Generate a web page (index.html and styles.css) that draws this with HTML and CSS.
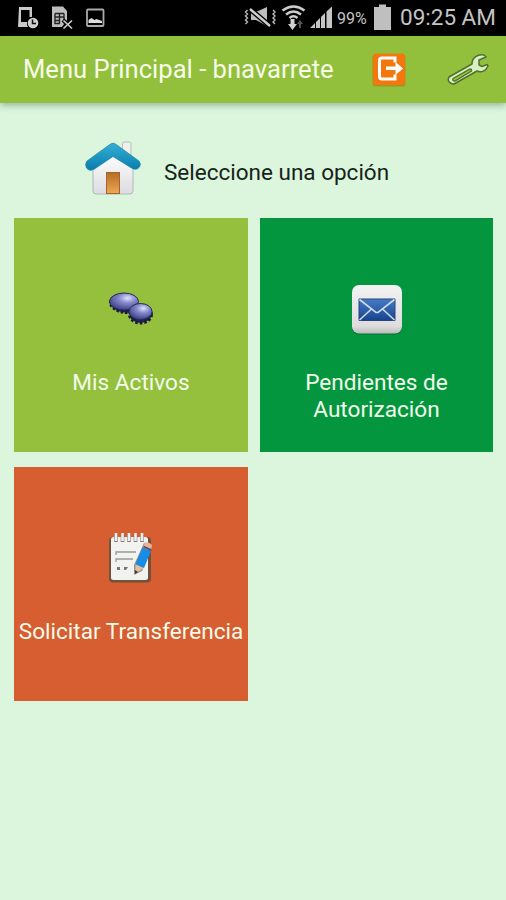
FILE: index.html
```html
<!DOCTYPE html>
<html lang="es">
<head>
<meta charset="utf-8">
<title>Menu Principal</title>
<link rel="stylesheet" href="styles.css">
</head>
<body>
<div class="status">
  <svg class="notifications" width="110" height="36" viewBox="0 0 110 36">
    <path d="M19 7h13v10h-2.500v-7h-8.500v12h6a7 7 0 0 0 1 5h-10z" fill="#c9c9c9"/>
    <circle cx="33" cy="23" r="5.300" fill="#d0d0d0"/>
    <path d="M32.500 19.500v4h3.500" fill="none" stroke="#111" stroke-width="1.500"/>
    <path d="M52 6.500h11l4 4.500v9l-5 7H52z" fill="#bdbdbd"/>
    <path d="M55 13.500h9M59.500 13.500v10M55 13.500v10h5M55 17h9M55 20.500h5M64 13.500v7" fill="none" stroke="#222" stroke-width="1.400"/>
    <path d="M63 20l9 9M72 20l-9 9" stroke="#000" stroke-width="4"/>
    <path d="M63.500 20.500l8.500 8M72 20.500l-8.500 8" stroke="#ccc" stroke-width="1.700"/>
    <rect x="87" y="9.500" width="16.500" height="16.500" rx="1" fill="none" stroke="#aaa" stroke-width="1.800"/>
    <path d="M88.500 23v-3l3-2 3 2 2-1 5.500 2v2z" fill="#ddd"/>
  </svg>
  <svg class="radios" width="92" height="36" viewBox="0 0 92 36">
    <path d="M2.500 10l-2 2 2 2-2 2 2 2-2 2 2 2-2 2M28 10l2 2-2 2 2 2-2 2 2 2-2 2 2 2" transform="translate(1 0)" fill="none" stroke="#bbb" stroke-width="1.400"/>
    <path d="M7 12h5l11-5v19l-11-6H7z" fill="#bdbdbd"/>
    <path d="M6 9l20 17" stroke="#000" stroke-width="5"/>
    <path d="M6 9l20 17" stroke="#d0d0d0" stroke-width="2.400"/>
    <g fill="none" stroke="#ccc" stroke-width="2.500">
      <path d="M38.500 10.500q11-8 22 0M42 14.500q7.500-6 15 0M45.500 18q4-3.500 8 0"/>
    </g>
    <path d="M46.500 19h4v5h2.500l-4.500 6-4.500-6h2.500z" fill="#d0d0d0"/>
    <path d="M56 20l3 4h-2v4h-2v-4h-2z" fill="#555"/>
    <path d="M66 28l5-5v5zM72 22l4-4v10h-4zM77 17l4-4v15h-4zM82.500 11.500l5.500-5v21.500h-5.500z" fill="#c5c5c5"/>
  </svg>
  <span class="percent">99%</span>
  <svg class="battery" width="20" height="36" viewBox="0 0 20 36"><path d="M1 7h5V4.500h7V7h5v23H1z" fill="#bfbfbf"/></svg>
  <span class="clock">09:25 AM</span>
</div>
<header class="bar">
  <h1>Menu Principal - bnavarrete</h1>
  <svg class="logout" width="36" height="36" viewBox="0 0 36 36">
    <rect x="1.500" y="2.500" width="33" height="32" rx="3" fill="#a87818" opacity=".6"/>
    <rect x="2" y="1.500" width="32" height="31.500" rx="3" fill="#f3770d"/>
    <path d="M24 10.500V6H11q-2.500 0-2.500 2.500v16q0 2.500 2.500 2.500h13v-4.500" fill="none" stroke="#fff" stroke-width="3"/>
    <path d="M15 14.500h9.500V10l7.500 6.500-7.500 6.500v-5H15z" fill="#fff"/>
  </svg>
  <svg class="wrench" width="44" height="36" viewBox="0 0 44 36">
    <path d="M3 25l23-13C26 6 31 2 38 3l2 2-7 3v5l3 1.500 5-2 1 1.500c-2 5-7 7-11 5L8 32C4 32 1 29 3 25z" fill="#d7efc4" stroke="#52702a" stroke-width="1.500" stroke-linejoin="round"/>
    <path d="M7 26.500l17-9.500q2 0 1.500 2L9 29q-3 0-2-2.500z" fill="#94c13c" stroke="#52702a" stroke-width="1.300"/>
  </svg>
</header>
<main>
  <div class="intro">
    <svg width="60" height="58" viewBox="0 0 60 58">
      <defs>
        <linearGradient id="roof" x2="0" y2="1"><stop stop-color="#35b0d5"/><stop offset="1" stop-color="#087cae"/></linearGradient>
        <linearGradient id="wall" x2="0" y2="1"><stop stop-color="#fff"/><stop offset="1" stop-color="#dcdce1"/></linearGradient>
        <linearGradient id="door" x2="0" y2="1"><stop stop-color="#b66b22"/><stop offset="1" stop-color="#eda953"/></linearGradient>
      </defs>
      <rect x="39.500" y="3" width="8.500" height="19" rx="1.500" fill="#edf0ed" stroke="#b5c0b9"/>
      <path d="M10 28L30 13l20 15v24q0 3-3 3H13q-3 0-3-3z" fill="url(#wall)" stroke="#afb8b5"/>
      <path d="M27.500 5q2.500-1.500 5 0L56 22q2.500 3 .5 6-3 4-8 1L30 17.500 11.500 30q-5 3-8-1-2-4 .5-7z" fill="url(#roof)" stroke="#21819b" stroke-width=".7"/>
      <rect x="23.500" y="33.500" width="13" height="21" fill="url(#door)" stroke="#a3652d"/>
    </svg>
    <span>Seleccione una opción</span>
  </div>
  <div class="grid">
    <section class="tile lime">
      <svg class="icon" width="60" height="60" viewBox="0 0 60 60">
        <defs><radialGradient id="disc" cx=".62" cy=".3" r=".65"><stop stop-color="#e0e2fa"/><stop offset=".45" stop-color="#8589cc"/><stop offset="1" stop-color="#484b91"/></radialGradient></defs>
        <ellipse cx="23" cy="24" rx="14" ry="8.500" transform="rotate(10 23 24)" fill="#222255" stroke="#191b36" stroke-width="2.500" stroke-dasharray="2.500 1.800"/>
        <ellipse cx="23" cy="21.500" rx="14.500" ry="8.500" fill="url(#disc)" stroke="#292b58"/>
        <ellipse cx="39.500" cy="34.500" rx="11" ry="8.500" fill="#222255" stroke="#191b36" stroke-width="3" stroke-dasharray="2.500 2"/>
        <ellipse cx="39.500" cy="31.500" rx="11.500" ry="8" fill="url(#disc)" stroke="#292b58"/>
      </svg>
      <p>Mis Activos</p>
    </section>
    <section class="tile green">
      <svg class="icon" width="60" height="60" viewBox="0 0 60 60">
        <defs>
          <linearGradient id="plate" x2="0" y2="1"><stop stop-color="#f3f3f3"/><stop offset=".85" stop-color="#ddd"/><stop offset="1" stop-color="#bbb"/></linearGradient>
          <linearGradient id="mail" x2="0" y2="1"><stop stop-color="#477cc6"/><stop offset="1" stop-color="#17438d"/></linearGradient>
        </defs>
        <rect x="5" y="6.500" width="50" height="48" rx="7" fill="#067335"/>
        <rect x="5" y="5" width="50" height="48.500" rx="7" fill="url(#plate)"/>
        <path d="M12 19h36v21.500H12z" fill="url(#mail)" stroke="#29427a"/>
        <path d="M12.500 40l12-11M47.500 40l-12-11M12.500 19.500l16.500 13h2l16.500-13" fill="none" stroke="#cfdaea" stroke-width="1.600"/>
      </svg>
      <p>Pendientes de<br>Autorización</p>
    </section>
    <section class="tile orange">
      <svg class="icon" width="60" height="60" viewBox="0 0 60 60">
        <rect x="8" y="8" width="42" height="45.500" rx="4" fill="#73513f"/>
        <rect x="10" y="8" width="37" height="43" rx="2.500" fill="#f2f2ef"/>
        <path d="M15 5v8M21.500 5v8M28 5v8M34.500 5v8M41 5v8" stroke="#8a7770" stroke-width="3.600"/>
        <path d="M15 4v8M21.500 4v8M28 4v8M34.500 4v8M41 4v8" stroke="#eee" stroke-width="2.600"/>
        <path d="M15 26v-3h20M15 33v-3h17" fill="none" stroke="#999" stroke-width="1.300"/>
        <path d="M16 38h3v3h-3zM23 38h4l-2 3h-2z" fill="#777"/>
        <path d="M33 36l10-22 6 2 1 5-9 21-8 4z" fill="#5f4b48" opacity=".6"/>
        <path d="M34.500 35l7-16.500 8.500 3.500-7 17z" fill="#198ce5"/>
        <path d="M42 18l2-4.500q5-1 7 3.500l-1 4.500z" fill="#e9b49b"/>
        <path d="M42.500 17.500l8 3.500" stroke="#5b4a57" stroke-width="1.500"/>
        <path d="M34.500 35.500l8 3.500-8.500 6z" fill="#dfc29d"/><path d="M34 41l3 2-3 2z" fill="#333"/>
      </svg>
      <p>Solicitar Transferencia</p>
    </section>
  </div>
</main>
</body>
</html>
```
FILE: styles.css
```css
* { box-sizing: border-box; }
body {
  margin: 0;
  min-height: 900px;
  background: #dcf6dd;
  font-family: Roboto, "Liberation Sans", sans-serif;
}
svg { display: block; flex: none; }
.status {
  display: flex;
  height: 36px;
  background: #000;
  color: #c4c4c4;
  white-space: nowrap;
}
.radios { margin-left: 134px; }
.percent { width: 37px; padding-left: 1px; font-size: 16px; line-height: 37px; }
.clock { margin-left: 7px; font-size: 22.5px; line-height: 35px; }
.bar {
  position: relative;
  display: flex;
  align-items: center;
  height: 67px;
  padding-left: 23px;
  background: #93c03c;
  box-shadow: 0 2px 7px rgba(50, 90, 60, .45);
}
h1 {
  width: 348px;
  margin: 0;
  color: #f6fce9;
  font-size: 25.6px;
  font-weight: 400;
  line-height: 69px;
  white-space: nowrap;
}
.wrench { margin-left: 39px; }
.intro {
  display: flex;
  height: 115px;
  padding: 36px 0 0 83px;
  color: #16231a;
  font-size: 22.5px;
}
.intro span { margin-left: 21px; line-height: 67px; white-space: nowrap; }
.grid {
  display: grid;
  grid-template-columns: 234px 233px;
  grid-auto-rows: 234px;
  gap: 14.5px 12px;
  padding-left: 14px;
}
.tile {
  display: flex;
  flex-direction: column;
  align-items: center;
  padding-top: 62px;
  color: #f2fbea;
}
.tile p {
  margin: 30px 0 0;
  font-size: 22.6px;
  line-height: 26.5px;
  text-align: center;
  white-space: nowrap;
}
.lime { background: #94c03d; }
.green { background: #04963f; }
.orange { background: #d75e30; }
```
